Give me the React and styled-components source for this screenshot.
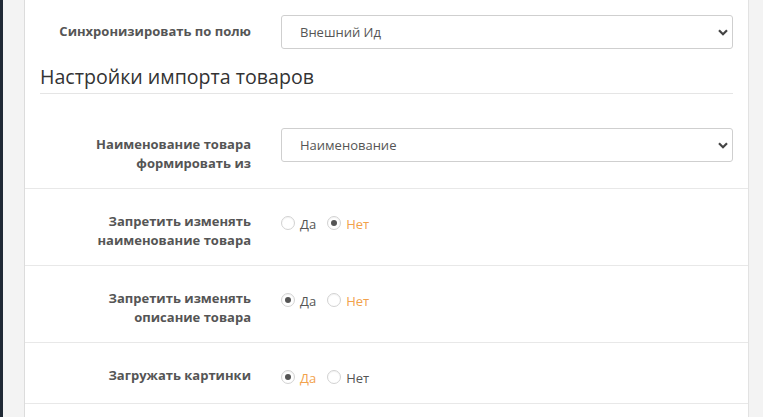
import React from 'react';
import styled, { createGlobalStyle } from 'styled-components';

const GlobalStyle = createGlobalStyle`
  html, body {
    margin: 0;
    padding: 0;
    height: 100%;
    overflow: hidden;
    background: #f3f3f3;
  }
  body {
    font-family: "Open Sans", "Liberation Sans", sans-serif;
    color: #555;
  }
`;

const Page = styled.div`
  display: flex;
  height: 100vh;
`;

const SideEdge = styled.div`
  width: 3px;
  background: #1f2935;
`;

const Gutter = styled.div`
  width: ${p => p.w}px;
  background: #f3f3f3;
`;

const Card = styled.div`
  flex: 1;
  background: #fff;
  border-left: 1px solid #dcdcdc;
  border-right: 1px solid #e2e2e2;
`;

const Row = styled.div`
  display: grid;
  grid-template-columns: 211px 452px;
  column-gap: 30px;
  padding: ${p => (p.plain ? '15px 15px 0' : '16px 15px')};
  border-bottom: ${p => (p.plain ? 'none' : '1px solid #e8e8e8')};
`;

const Label = styled.label`
  padding-top: 7px;
  text-align: right;
  font-size: 13px;
  line-height: 18.57px;
  font-weight: 700;
  color: #555;
`;

const SectionTitle = styled.h3`
  margin: 17px 15px 18px;
  padding-bottom: 5px;
  border-bottom: 1px solid #e5e5e5;
  font-size: 19.6px;
  line-height: 22px;
  font-weight: 400;
  color: #333;
`;

const SelectWrap = styled.div`
  position: relative;
  height: 34px;
`;

const Select = styled.select`
  appearance: none;
  width: 100%;
  height: 34px;
  box-sizing: border-box;
  padding: 0 30px 0 18px;
  border: 1px solid #cfcfcf;
  border-radius: 3px;
  background: #fff;
  font-family: "Open Sans", "Liberation Sans", sans-serif;
  font-size: 13px;
  color: #555;
  outline: none;
`;

const Chevron = styled.svg`
  position: absolute;
  right: 5px;
  top: 14px;
  pointer-events: none;
`;

const Radios = styled.div`
  display: flex;
  padding-top: 11px;
  gap: 11px;
`;

const Option = styled.label`
  display: inline-flex;
  align-items: flex-start;
  gap: 5px;
  font-size: 13px;
  line-height: 17px;
  color: ${p => (p.accent ? '#f2a24c' : '#555')};
`;

const Circle = styled.span`
  box-sizing: border-box;
  width: 14px;
  height: 14px;
  border-radius: 50%;
  border: 1px solid #d2d2d2;
  background: #fff;
  box-shadow: inset 0 1px 1px rgba(0, 0, 0, 0.05);
  display: flex;
  align-items: center;
  justify-content: center;

  &::after {
    content: '';
    width: 6px;
    height: 6px;
    border-radius: 50%;
    background: ${p => (p.checked ? '#555' : 'transparent')};
  }
`;

function Dropdown({ value }) {
  return (
    <SelectWrap>
      <Select defaultValue={value}>
        <option>{value}</option>
      </Select>
      <Chevron width="10" height="7" viewBox="0 0 10 7">
        <path d="M1 1.2 L5 5.2 L9 1.2" fill="none" stroke="#444" strokeWidth="2.2" />
      </Chevron>
    </SelectWrap>
  );
}

function YesNo({ value, accent }) {
  return (
    <Radios>
      <Option accent={accent === 'yes'}>
        <Circle checked={value === 'yes'} />
        Да
      </Option>
      <Option accent={accent === 'no'}>
        <Circle checked={value === 'no'} />
        Нет
      </Option>
    </Radios>
  );
}

const rows = [
  { label: ['Запретить изменять', 'наименование товара'], value: 'no', accent: 'no' },
  { label: ['Запретить изменять', 'описание товара'], value: 'yes', accent: 'no' },
  { label: ['Загружать картинки'], value: 'yes', accent: 'yes' },
];

export default function App() {
  return (
    <Page>
      <GlobalStyle />
      <SideEdge />
      <Gutter w={21} />
      <Card>
        <Row plain>
          <Label>Синхронизировать по полю</Label>
          <Dropdown value="Внешний Ид" />
        </Row>
        <SectionTitle>Настройки импорта товаров</SectionTitle>
        <Row>
          <Label>Наименование товара<br />формировать из</Label>
          <Dropdown value="Наименование" />
        </Row>
        {rows.map((r, i) => (
          <Row key={i}>
            <Label>
              {r.label.map((l, j) => (
                <React.Fragment key={j}>
                  {j > 0 && <br />}
                  {l}
                </React.Fragment>
              ))}
            </Label>
            <YesNo value={r.value} accent={r.accent} />
          </Row>
        ))}
      </Card>
      <Gutter w={14} />
    </Page>
  );
}
